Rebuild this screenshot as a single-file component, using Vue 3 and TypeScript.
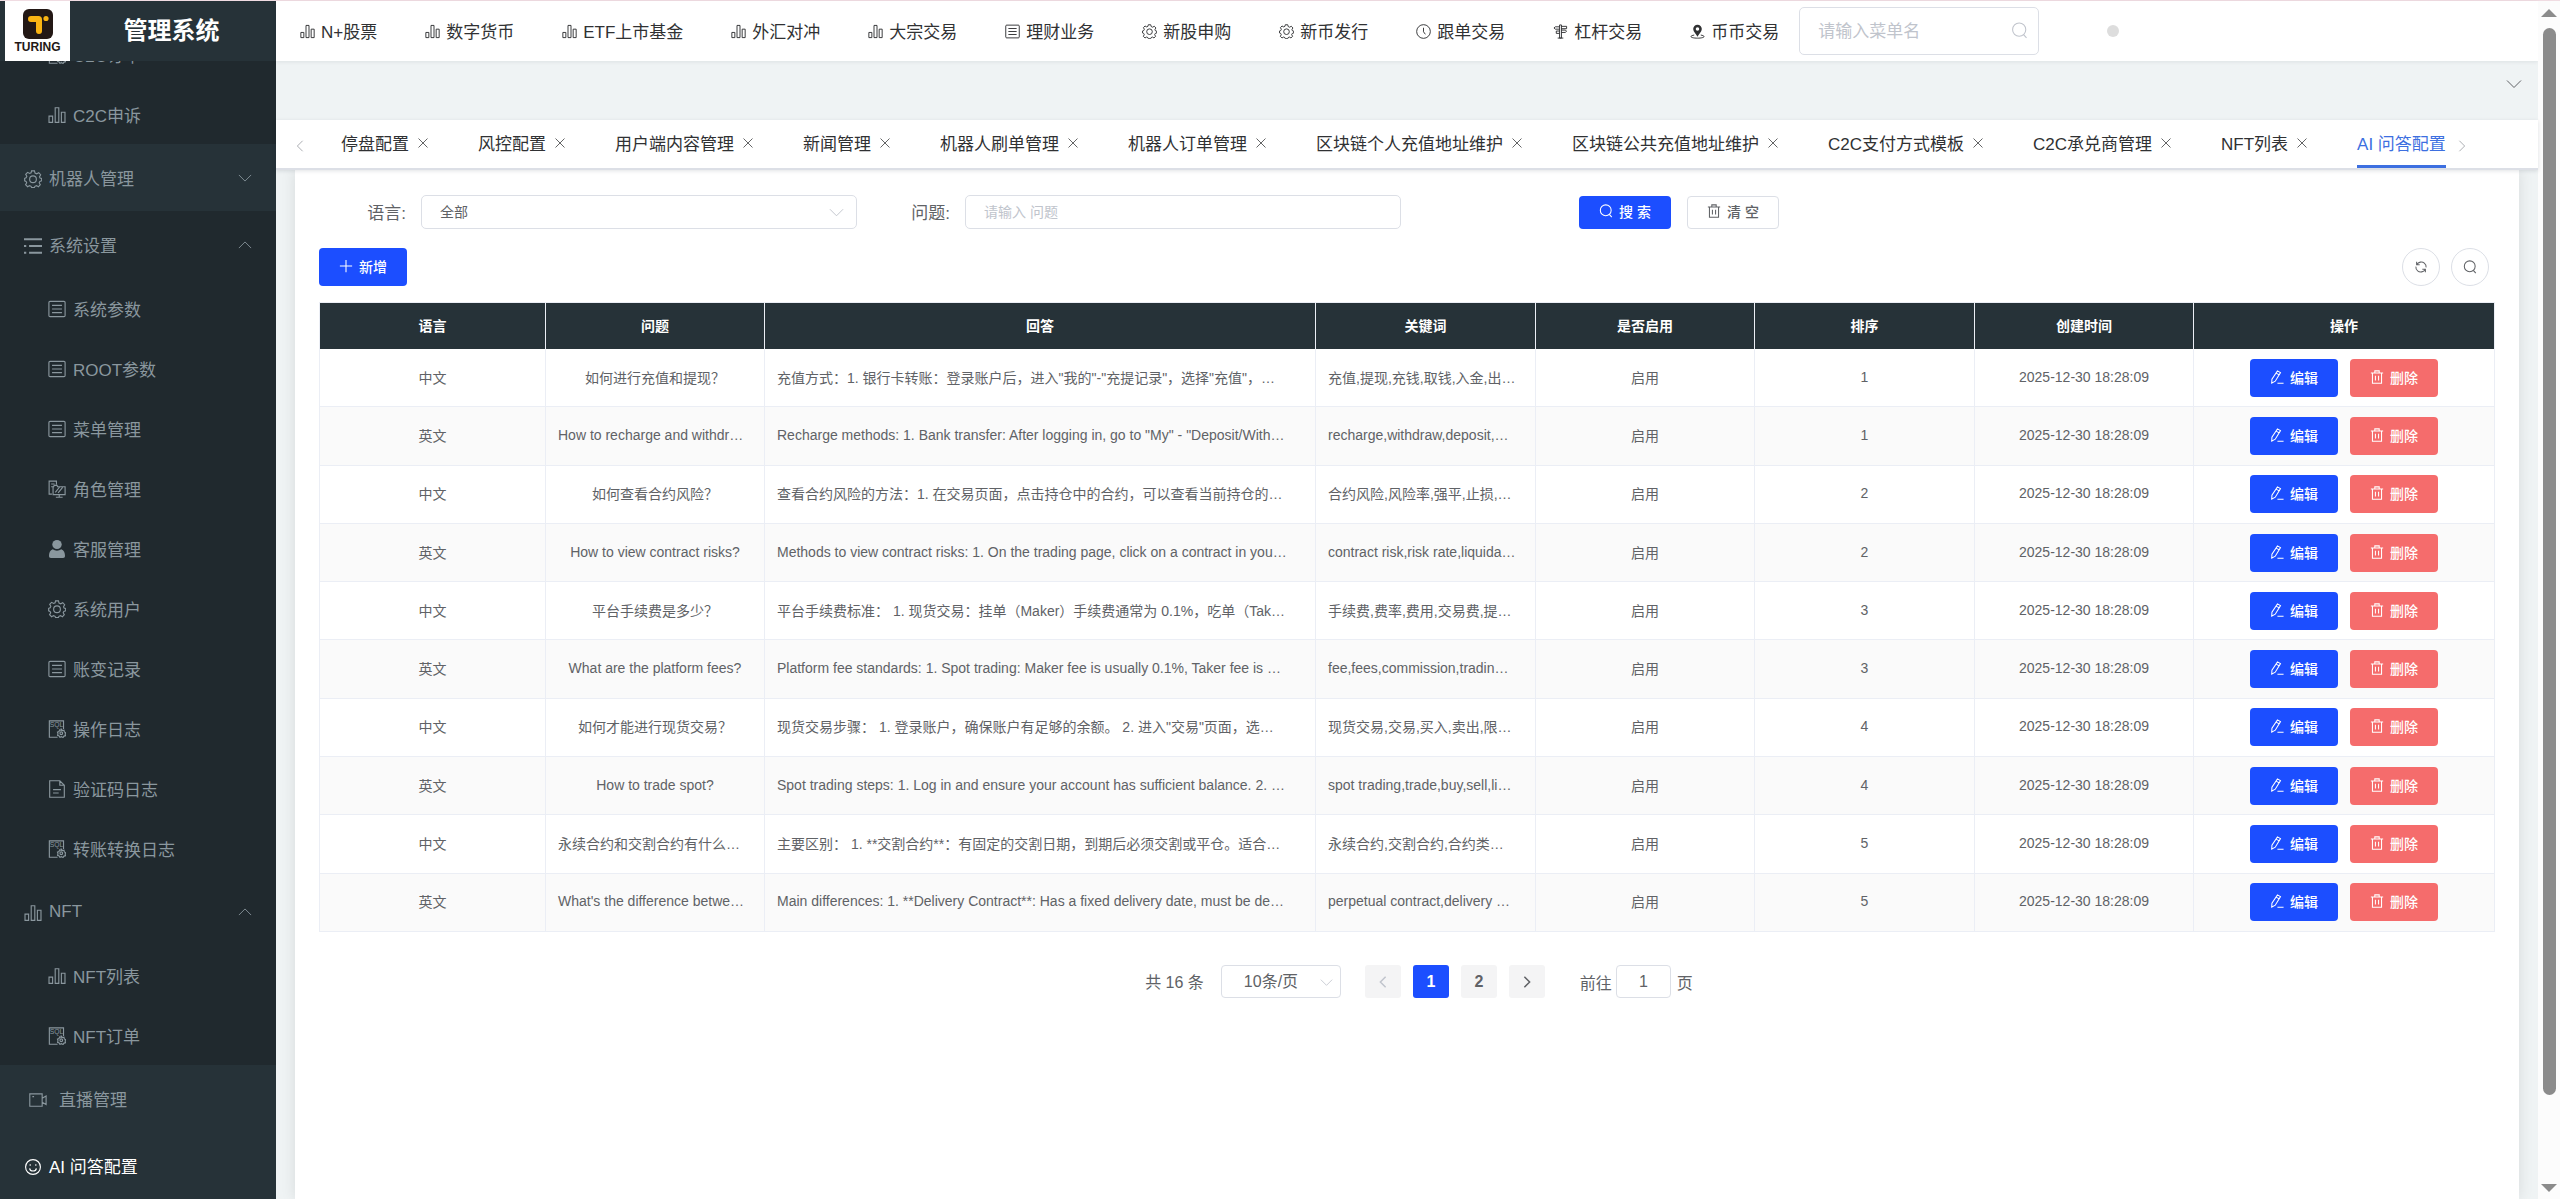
<script setup lang="ts">
import { ref } from 'vue'

interface MenuItem {
  icon: string
  label: string
  kind: 'group' | 'open' | 'sub' | 'plain' | 'live'
  arrow?: 'down' | 'up'
  active?: boolean
}

interface QaRow {
  lang: string
  question: string
  answer: string
  keywords: string
  sort: number
}

const topMenu = [
  { icon: 'bars', label: 'N+股票' },
  { icon: 'bars', label: '数字货币' },
  { icon: 'bars', label: 'ETF上市基金' },
  { icon: 'bars', label: '外汇对冲' },
  { icon: 'bars', label: '大宗交易' },
  { icon: 'list', label: '理财业务' },
  { icon: 'gear', label: '新股申购' },
  { icon: 'gear', label: '新币发行' },
  { icon: 'clock', label: '跟单交易' },
  { icon: 'sign', label: '杠杆交易' },
  { icon: 'pin', label: '币币交易' },
]

const sideMenu: MenuItem[] = [
  { icon: 'sql', label: 'C2C订单', kind: 'sub' },
  { icon: 'bars', label: 'C2C申诉', kind: 'sub' },
  { icon: 'gear', label: '机器人管理', kind: 'group', arrow: 'down' },
  { icon: 'unfold', label: '系统设置', kind: 'open', arrow: 'up' },
  { icon: 'list', label: '系统参数', kind: 'sub' },
  { icon: 'list', label: 'ROOT参数', kind: 'sub' },
  { icon: 'list', label: '菜单管理', kind: 'sub' },
  { icon: 'role', label: '角色管理', kind: 'sub' },
  { icon: 'user', label: '客服管理', kind: 'sub' },
  { icon: 'gear', label: '系统用户', kind: 'sub' },
  { icon: 'list', label: '账变记录', kind: 'sub' },
  { icon: 'sql', label: '操作日志', kind: 'sub' },
  { icon: 'doc', label: '验证码日志', kind: 'sub' },
  { icon: 'sql', label: '转账转换日志', kind: 'sub' },
  { icon: 'bars', label: 'NFT', kind: 'open', arrow: 'up' },
  { icon: 'bars', label: 'NFT列表', kind: 'sub' },
  { icon: 'sql', label: 'NFT订单', kind: 'sub' },
  { icon: 'video', label: '直播管理', kind: 'live' },
  { icon: 'face', label: 'AI 问答配置', kind: 'plain', active: true },
]

const tabs = [
  '停盘配置',
  '风控配置',
  '用户端内容管理',
  '新闻管理',
  '机器人刷单管理',
  '机器人订单管理',
  '区块链个人充值地址维护',
  '区块链公共充值地址维护',
  'C2C支付方式模板',
  'C2C承兑商管理',
  'NFT列表',
]

const columns = [
  { title: '语言', width: 226 },
  { title: '问题', width: 219 },
  { title: '回答', width: 551 },
  { title: '关键词', width: 220 },
  { title: '是否启用', width: 219 },
  { title: '排序', width: 220 },
  { title: '创建时间', width: 219 },
  { title: '操作', width: 301 },
]

const rows: QaRow[] = [
  { lang: '中文', question: '如何进行充值和提现？', answer: '充值方式：1. 银行卡转账：登录账户后，进入"我的"-"充提记录"，选择"充值"，…', keywords: '充值,提现,充钱,取钱,入金,出…', sort: 1 },
  { lang: '英文', question: 'How to recharge and withdr…', answer: 'Recharge methods: 1. Bank transfer: After logging in, go to "My" - "Deposit/With…', keywords: 'recharge,withdraw,deposit,…', sort: 1 },
  { lang: '中文', question: '如何查看合约风险？', answer: '查看合约风险的方法：1. 在交易页面，点击持仓中的合约，可以查看当前持仓的…', keywords: '合约风险,风险率,强平,止损,…', sort: 2 },
  { lang: '英文', question: 'How to view contract risks?', answer: 'Methods to view contract risks: 1. On the trading page, click on a contract in you…', keywords: 'contract risk,risk rate,liquida…', sort: 2 },
  { lang: '中文', question: '平台手续费是多少？', answer: '平台手续费标准： 1. 现货交易：挂单（Maker）手续费通常为 0.1%，吃单（Tak…', keywords: '手续费,费率,费用,交易费,提…', sort: 3 },
  { lang: '英文', question: 'What are the platform fees?', answer: 'Platform fee standards: 1. Spot trading: Maker fee is usually 0.1%, Taker fee is …', keywords: 'fee,fees,commission,tradin…', sort: 3 },
  { lang: '中文', question: '如何才能进行现货交易？', answer: '现货交易步骤： 1. 登录账户，确保账户有足够的余额。 2. 进入"交易"页面，选…', keywords: '现货交易,交易,买入,卖出,限…', sort: 4 },
  { lang: '英文', question: 'How to trade spot?', answer: 'Spot trading steps: 1. Log in and ensure your account has sufficient balance. 2. …', keywords: 'spot trading,trade,buy,sell,li…', sort: 4 },
  { lang: '中文', question: '永续合约和交割合约有什么…', answer: '主要区别： 1. **交割合约**：有固定的交割日期，到期后必须交割或平仓。适合…', keywords: '永续合约,交割合约,合约类…', sort: 5 },
  { lang: '英文', question: "What's the difference betwe…", answer: 'Main differences: 1. **Delivery Contract**: Has a fixed delivery date, must be de…', keywords: 'perpetual contract,delivery …', sort: 5 },
]

const createdAt = '2025-12-30 18:28:09'
const menuQuery = ref('')
const language = ref('all')
const question = ref('')
const pageSize = ref('10')
const jumpTo = ref('1')

const isClipped = (text: string): boolean => text.endsWith('…')
</script>

<template>
  <div class="app">
    <svg class="defs" aria-hidden="true">
      <symbol id="i-bars" viewBox="0 0 16 16">
        <path d="M.9 9h3.2v5.500H.9zM6.400 1.500h3.200v13H6.400zM11.900 5.500h3.200v9h-3.200z" />
      </symbol>
      <symbol id="i-list" viewBox="0 0 16 16">
        <rect x=".8" y="1.200" width="14.400" height="13.600" rx="1" />
        <path d="M3.600 4.800h8.800M3.600 8h8.800M3.600 11.200h8.800" />
      </symbol>
      <symbol id="i-gear" viewBox="0 0 16 16">
        <path d="M6.700.8h2.600l.5 1.900 1.500.7 1.800-1 1.700 1.800-1 1.800.5 1.200 1.400.4v2l-1.600.5-.6 1.300 1 1.700-1.700 1.800-1.700-1-1.400.6-.5 1.200H6.800l-.5-1.200-1.400-.6-1.700 1-1.800-1.800 1-1.700-.6-1.300L.6 9.600V7.400l1.300-.5.6-1.300-1-1.700 1.700-1.800 1.800 1 1.300-.6z" />
        <circle cx="8" cy="8.200" r="3" />
      </symbol>
      <symbol id="i-clock" viewBox="0 0 16 16">
        <circle cx="8" cy="8" r="7.300" />
        <path d="M8 4v4.300l2 2.700" />
      </symbol>
      <symbol id="i-sign" viewBox="0 0 16 16">
        <path d="M7 1h2v14H7zM7 3H2.500L1 4.200l1.500 1.300H7M9 2.500h5.500V5H9M7 7.500H3.500V10H7M9 6.500h4l1.500 1.200L13 9H9M5 15h6" />
      </symbol>
      <symbol id="i-pin" viewBox="0 0 16 16">
        <path fill="currentColor" stroke="none" fill-rule="evenodd" d="M8 .8a4.600 4.600 0 0 1 4.600 4.600C12.600 8.500 9.500 10.600 8 13.500 6.500 10.600 3.400 8.500 3.400 5.400A4.600 4.600 0 0 1 8 .8zm0 2.700a1.900 1.900 0 1 0 0 3.800 1.900 1.900 0 0 0 0-3.800z" />
        <path d="M4.500 11.800C2.500 12.100 1 12.700 1 13.400c0 1 3 1.700 7 1.700s7-.7 7-1.700c0-.7-1.500-1.300-3.500-1.600" />
      </symbol>
      <symbol id="i-unfold" viewBox="0 0 16 16">
        <path stroke-width="1.800" d="M0 2h16M4.500 8H16M4.500 14H16M0 8h2M0 14h2" />
      </symbol>
      <symbol id="i-role" viewBox="0 0 16 16">
        <path d="M3.500 12.500H1V1h6.500v3M2.800 3.500h3M2.800 6h1.500M5 6l.5-1.200H8L8.500 6h6.700v7H4.500V6zM7 15.300h6M10 13v2M6.500 11l4-5M9 11.500l4-5" />
      </symbol>
      <symbol id="i-user" viewBox="0 0 16 18">
        <ellipse cx="8" cy="4.500" rx="4.700" ry="4.500" fill="currentColor" stroke="none" />
        <path fill="currentColor" stroke="none" d="M3.800 9.300c2.200 1.800 6.200 1.800 8.400 0 2.800 1 3.800 3.700 3.800 6.400 0 1.300-.6 2.300-2 2.300H2c-1.400 0-2-1-2-2.300C0 13 1 10.300 3.800 9.300z" />
      </symbol>
      <symbol id="i-sql" viewBox="0 0 16 16">
        <path d="M8.500 15.300H1.200V.8h12.600V8" />
        <text x="7.500" y="6.500" font-size="6" text-anchor="middle" fill="currentColor" stroke="none">SQL</text>
        <circle cx="11.800" cy="11.800" r="1.200" />
        <path d="M11.800 8.200l.9 1.100 1.500-.2.300 1.500 1.300.7-.6 1.200.5 1.400-1.500.4-.8 1.200-1.400-.7-1.400.6-.7-1.300-1.400-.5.400-1.400-.5-1.400 1.400-.6.500-1.400 1.500.4z" />
      </symbol>
      <symbol id="i-doc" viewBox="0 0 16 16">
        <path d="M1.500.7h9l4 4v10.600h-13zM10.500.7v4h4M4.500 8.500h7M4.500 11.500h5" />
      </symbol>
      <symbol id="i-video" viewBox="0 0 16 16">
        <path d="M.7 2.500h11v11H.7zM11.700 6.500l3.500-2v7.500l-3.500-2M3 5h1.500" />
      </symbol>
      <symbol id="i-face" viewBox="0 0 16 16">
        <circle cx="8" cy="8" r="6.600" />
        <path d="M5.500 5.500v1.300M10.500 5.500v1.300M5 9.200c.5 3.200 5.500 3.200 6 0" />
      </symbol>
      <symbol id="i-search" viewBox="0 0 16 16">
        <circle cx="7.700" cy="7.200" r="6.200" />
        <path d="M11.800 11.800l2.800 3.200" />
      </symbol>
      <symbol id="i-trash" viewBox="0 0 16 16">
        <path d="M1 3.500h14M5.500 3.200V1h5v2.200M2.800 3.500v11.700h10.400V3.500M6.200 6.500v5.500M9.800 6.500v5.500" />
      </symbol>
      <symbol id="i-edit" viewBox="0 0 16 16">
        <path d="M8.500 1l3.500 2L6 12.800 2 15l.2-4.500zM7 3.600l3.500 2M8.500 15.200h7" />
      </symbol>
      <symbol id="i-refresh" viewBox="0 0 16 16">
        <path d="M3 2v3.500h3.500M3.200 5.200C5 2.300 9 1.300 11.800 3.500c1.800 1.500 2.300 3 2 5M13 14v-3.500H9.500M12.800 10.800C11 13.700 7 14.700 4.200 12.500c-1.800-1.500-2.300-3-2-5" />
      </symbol>
      <symbol id="i-plus" viewBox="0 0 16 16"><path d="M8 1v14M1 8h14" /></symbol>
      <symbol id="i-close" viewBox="0 0 16 16"><path d="M2 2l12 12M14 2L2 14" /></symbol>
      <symbol id="i-down" viewBox="0 0 16 16"><path d="M1 4.500l7 7 7-7" /></symbol>
      <symbol id="i-up" viewBox="0 0 16 16"><path d="M1 11.500l7-7 7 7" /></symbol>
      <symbol id="i-left" viewBox="0 0 16 16"><path d="M11.500 1l-7 7 7 7" /></symbol>
      <symbol id="i-right" viewBox="0 0 16 16"><path d="M4.500 1l7 7-7 7" /></symbol>
    </svg>

    <aside class="side">
      <div class="brand">
        <div class="logo">
          <svg class="logo-mark" viewBox="0 0 30 30" aria-hidden="true">
            <rect width="30" height="30" rx="6" fill="#231815" />
            <path fill="#fbb413" d="M8 7h7.500a3.500 3.500 0 0 1 3.500 3.500V22a3 3 0 0 1-6 0v-9H8a3 3 0 0 1 0-6z" />
            <circle cx="23" cy="9.500" r="2.600" fill="#fbb413" />
          </svg>
          <span class="logo-name">TURING</span>
        </div>
        <h1 class="title">管理系统</h1>
      </div>
      <nav class="side-menu">
        <a
          v-for="item in sideMenu"
          :key="item.label"
          href="#"
          class="side-item"
          :class="[item.kind, { active: item.active }]"
        >
          <svg class="side-icon"><use :href="'#i-' + item.icon" /></svg>
          <span>{{ item.label }}</span>
          <svg v-if="item.arrow" class="side-arrow"><use :href="'#i-' + item.arrow" /></svg>
        </a>
      </nav>
    </aside>

    <div class="main">
      <header class="top">
        <nav class="top-menu">
          <a v-for="item in topMenu" :key="item.label" href="#" class="top-item">
            <svg class="top-icon"><use :href="'#i-' + item.icon" /></svg>
            <span>{{ item.label }}</span>
          </a>
        </nav>
        <div class="menu-search">
          <input v-model="menuQuery" type="text" placeholder="请输入菜单名" aria-label="请输入菜单名" />
          <svg class="menu-search-icon"><use href="#i-search" /></svg>
        </div>
        <span class="dot"></span>
      </header>

      <div class="band">
        <button type="button" class="bare" aria-label="展开">
          <svg class="icon16"><use href="#i-down" /></svg>
        </button>
      </div>

      <div class="tabs">
        <button type="button" class="bare tab-arrow" aria-label="向左">
          <svg class="icon12"><use href="#i-left" /></svg>
        </button>
        <div v-for="tab in tabs" :key="tab" class="tab">
          <a href="#">{{ tab }}</a>
          <button type="button" class="bare" aria-label="关闭">
            <svg class="icon12"><use href="#i-close" /></svg>
          </button>
        </div>
        <div class="tab current"><a href="#">AI 问答配置</a></div>
        <button type="button" class="bare tab-arrow" aria-label="向右">
          <svg class="icon12"><use href="#i-right" /></svg>
        </button>
      </div>

      <main class="card">
        <form class="filters" @submit.prevent>
          <div class="field">
            <label for="lang">语言:</label>
            <div class="control">
              <select id="lang" v-model="language"><option value="all">全部</option></select>
              <svg class="caret"><use href="#i-down" /></svg>
            </div>
          </div>
          <div class="field">
            <label for="question">问题:</label>
            <div class="control">
              <input id="question" v-model="question" type="text" placeholder="请输入 问题" />
            </div>
          </div>
          <div class="filter-actions">
            <button type="submit" class="btn small primary">
              <svg class="icon14"><use href="#i-search" /></svg>搜 索
            </button>
            <button type="reset" class="btn small outline">
              <svg class="icon14"><use href="#i-trash" /></svg>清 空
            </button>
          </div>
        </form>

        <div class="toolbar">
          <button type="button" class="btn primary">
            <svg class="icon14"><use href="#i-plus" /></svg>新增
          </button>
          <div class="tools">
            <button type="button" class="round" aria-label="刷新">
              <svg class="icon14"><use href="#i-refresh" /></svg>
            </button>
            <button type="button" class="round" aria-label="搜索">
              <svg class="icon14"><use href="#i-search" /></svg>
            </button>
          </div>
        </div>

        <table class="grid">
          <colgroup>
            <col v-for="col in columns" :key="col.title" :style="{ width: col.width + 'px' }" />
          </colgroup>
          <thead>
            <tr>
              <th v-for="col in columns" :key="col.title" scope="col">{{ col.title }}</th>
            </tr>
          </thead>
          <tbody>
            <tr v-for="(row, i) in rows" :key="i">
              <td>{{ row.lang }}</td>
              <td :class="{ clipped: isClipped(row.question) }">{{ row.question }}</td>
              <td :class="{ clipped: isClipped(row.answer) }">{{ row.answer }}</td>
              <td :class="{ clipped: isClipped(row.keywords) }">{{ row.keywords }}</td>
              <td>启用</td>
              <td>{{ row.sort }}</td>
              <td>{{ createdAt }}</td>
              <td class="ops">
                <div class="actions">
                  <button type="button" class="btn primary">
                    <svg class="icon14"><use href="#i-edit" /></svg>编辑
                  </button>
                  <button type="button" class="btn danger">
                    <svg class="icon14"><use href="#i-trash" /></svg>删除
                  </button>
                </div>
              </td>
            </tr>
          </tbody>
        </table>

        <div class="pager">
          <span class="total">共 16 条</span>
          <div class="size">
            <select v-model="pageSize" aria-label="每页条数"><option value="10">10条/页</option></select>
            <svg class="caret"><use href="#i-down" /></svg>
          </div>
          <div class="pages">
            <button type="button" disabled aria-label="上一页">
              <svg class="icon12"><use href="#i-left" /></svg>
            </button>
            <button type="button" class="on">1</button>
            <button type="button">2</button>
            <button type="button" aria-label="下一页">
              <svg class="icon12"><use href="#i-right" /></svg>
            </button>
          </div>
          <label class="jump">前往<input v-model="jumpTo" type="text" />页</label>
        </div>
      </main>
    </div>

    <div class="scroll" aria-hidden="true">
      <span class="scroll-up"></span>
      <span class="scroll-thumb"></span>
      <span class="scroll-gap"></span>
      <span class="scroll-down"></span>
    </div>
  </div>
</template>

<style>
body {
  margin: 0;
  overflow: hidden;
}
</style>

<style scoped>
.app {
  display: flex;
  box-sizing: border-box;
  height: 100vh;
  border-top: 1px solid #f0dce2;
  background: #eff3f4;
  color: #606266;
  font-family: 'Liberation Sans', 'Noto Sans CJK SC', sans-serif;
  font-size: 14px;
}

.app * {
  box-sizing: border-box;
}

.defs {
  display: none;
}

svg {
  flex: none;
  fill: none;
  stroke: currentColor;
  stroke-width: 1;
}

button,
input,
select {
  margin: 0;
  font: inherit;
  color: inherit;
}

button {
  cursor: pointer;
}

a {
  color: inherit;
  text-decoration: none;
}

.icon12 {
  width: 12px;
  height: 12px;
}

.icon14 {
  width: 14px;
  height: 14px;
}

.icon16 {
  width: 16px;
  height: 16px;
}

.bare {
  display: flex;
  padding: 0;
  border: 0;
  background: none;
}

/* sidebar */
.side {
  display: flex;
  flex: none;
  flex-direction: column;
  width: 276px;
  background: #20292e;
}

.brand {
  display: flex;
  flex: none;
  height: 60px;
  padding-left: 5px;
  background: #263238;
}

.logo {
  display: flex;
  flex-direction: column;
  align-items: center;
  width: 65px;
  padding-top: 8px;
  background: #fff;
}

.logo-mark {
  width: 30px;
  height: 30px;
  stroke: none;
}

.logo-name {
  margin-top: 1px;
  color: #231815;
  font-size: 12px;
  font-weight: 700;
  line-height: 14px;
}

.title {
  flex: 1;
  margin: 0;
  padding-right: 3px;
  color: #fff;
  font-size: 24px;
  font-weight: 700;
  line-height: 60px;
  text-align: center;
}

.side-menu {
  display: flex;
  flex: 1;
  flex-direction: column;
  justify-content: flex-end;
  min-height: 0;
  overflow: hidden;
}

.side-item {
  display: flex;
  flex: none;
  align-items: center;
  gap: 7px;
  height: 67px;
  padding: 0 24px;
  background: #263238;
  color: #8a979e;
  font-size: 17px;
}

.side-item.sub {
  height: 60px;
  padding-left: 48px;
  background: #20292e;
}

.side-item.open {
  background: #20292e;
}

.side-item.live {
  gap: 12px;
  padding-left: 29px;
}

.side-item.active {
  color: #fff;
}

.side-icon {
  width: 18px;
  height: 18px;
  margin-top: 2px;
}

.side-arrow {
  width: 14px;
  height: 14px;
  margin-left: auto;
}

/* top bar */
.main {
  display: flex;
  flex: 1;
  flex-direction: column;
  min-width: 0;
}

.top {
  display: flex;
  flex: none;
  align-items: center;
  height: 60px;
  background: #fff;
  box-shadow: 0 1px 4px rgba(0, 21, 41, 0.08);
}

.top-menu {
  display: flex;
}

.top-item {
  display: flex;
  align-items: center;
  gap: 6px;
  padding: 0 24px;
  color: #303133;
  font-size: 17px;
  white-space: nowrap;
}

.top-item:last-child {
  padding-right: 20px;
}

.top-item span,
.tab a,
.field label,
.total {
  padding-bottom: 2px;
}

.top-icon {
  width: 15px;
  height: 15px;
}

.menu-search {
  position: relative;
  width: 240px;
}

.menu-search input {
  display: block;
  width: 100%;
  height: 48px;
  padding: 2px 18px 0;
  border: 1px solid #dcdfe6;
  border-radius: 5px;
  background: #fff;
  font-size: 17px;
  outline: 0;
}

input::placeholder {
  color: #c0c4cc;
  opacity: 1;
}

.menu-search-icon {
  position: absolute;
  top: 15px;
  right: 11px;
  width: 17px;
  height: 17px;
  color: #c0c4cc;
}

.dot {
  width: 12px;
  height: 12px;
  margin-left: 68px;
  border-radius: 50%;
  background: #ddd;
}

.band {
  display: flex;
  flex: none;
  justify-content: flex-end;
  height: 59px;
  padding: 15px 16px 0;
}

/* page tabs */
.tabs {
  position: relative;
  display: flex;
  flex: none;
  align-items: center;
  height: 50px;
  padding-left: 18px;
  border-bottom: 2px solid #dcdfe6;
  background: #fff;
  box-shadow: 0 1px 4px rgba(0, 21, 41, 0.12);
  color: #303133;
  font-size: 17px;
  white-space: nowrap;
}

.tab-arrow {
  padding-top: 3px;
  color: #909399;
}

.tab {
  display: flex;
  align-items: center;
  gap: 8px;
  height: 48px;
  margin-right: 49px;
  padding-bottom: 2px;
}

.tab-arrow + .tab {
  margin-left: 35px;
}

.tab.current {
  margin-right: 10px;
  padding: 1px 0 0;
  border-bottom: 3px solid #3d6fe0;
  color: #3d6fe0;
}

/* content card */
.card {
  flex: 1;
  min-height: 0;
  margin: 0 19px;
  padding: 25px 24px 0;
  background: #fff;
  box-shadow: 0 0 14px rgba(0, 0, 0, 0.1);
}

.filters {
  display: grid;
  grid-template-columns: repeat(4, 1fr);
}

.field {
  display: flex;
  align-items: center;
  padding-right: 6px;
}

.field label {
  flex: none;
  width: 102px;
  padding-right: 15px;
  font-size: 17px;
  text-align: right;
}

.control {
  position: relative;
  flex: 1;
}

.control input,
.control select {
  display: block;
  width: 100%;
  height: 34px;
  padding: 0 18px;
  border: 1px solid #dcdfe6;
  border-radius: 5px;
  background: #fff;
  appearance: none;
  outline: 0;
}

.caret {
  position: absolute;
  top: 10px;
  right: 13px;
  width: 15px;
  height: 15px;
  color: #c0c4cc;
  pointer-events: none;
}

.filter-actions {
  display: flex;
  align-items: center;
  justify-content: center;
  gap: 16px;
}

.btn {
  display: flex;
  align-items: center;
  justify-content: center;
  gap: 6px;
  width: 88px;
  height: 38px;
  padding: 0 0 2px;
  border: 0;
  border-radius: 4px;
  color: #fff;
  font-weight: 500;
}

.btn svg,
.round svg {
  stroke-width: 1.2;
}

.btn.small {
  width: 92px;
  height: 33px;
}

.btn.primary {
  background: #1c4eff;
}

.btn.danger {
  background: #f56c6c;
}

.btn.outline {
  border: 1px solid #dcdfe6;
  background: #fff;
  color: #606266;
}

.toolbar {
  display: flex;
  align-items: center;
  justify-content: space-between;
  padding: 19px 6px 16px 0;
}

.tools {
  display: flex;
  gap: 11px;
}

.round {
  display: flex;
  align-items: center;
  justify-content: center;
  width: 38px;
  height: 38px;
  padding: 0;
  border: 1px solid #dcdfe6;
  border-radius: 50%;
  background: #fff;
}

/* data table */
.grid {
  width: 100%;
  height: 630px;
  border: 1px solid #ebeef5;
  border-right: 0;
  border-bottom: 0;
  border-spacing: 0;
  table-layout: fixed;
}

.grid th {
  height: 46px;
  padding: 0 12px 3px;
  border-right: 1px solid #ebeef5;
  background: #263238;
  color: #fff;
  font-weight: 700;
}

.grid td {
  padding: 0 12px 2px;
  border-right: 1px solid #ebeef5;
  border-bottom: 1px solid #ebeef5;
  text-align: center;
  white-space: nowrap;
}

.grid td.ops {
  padding-bottom: 0;
}

.grid td.clipped {
  overflow: hidden;
  text-align: left;
}

.grid tbody tr:nth-child(even) {
  background: #fafafa;
}

.actions {
  display: flex;
  justify-content: center;
  gap: 12px;
}

/* pagination */
.pager {
  display: flex;
  align-items: center;
  justify-content: center;
  padding: 33px 0 0 24px;
  font-size: 16px;
}

.size {
  position: relative;
  width: 120px;
  margin: 0 24px 0 17px;
}

.size select {
  display: block;
  width: 100%;
  height: 33px;
  padding: 0 22px;
  border: 1px solid #dcdfe6;
  border-radius: 4px;
  background: #fff;
  appearance: none;
}

.size .caret {
  right: 8px;
  width: 13px;
}

.pages {
  display: flex;
  gap: 12px;
}

.pages button {
  display: flex;
  align-items: center;
  justify-content: center;
  width: 36px;
  height: 33px;
  padding: 0;
  border: 0;
  border-radius: 3px;
  background: #f4f4f5;
  font-weight: 700;
}

.pages svg {
  stroke-width: 2;
}

.pages button:disabled {
  color: #c0c4cc;
}

.pages .on {
  background: #1c4eff;
  color: #fff;
}

.jump {
  display: flex;
  align-items: center;
  margin-left: 35px;
}

.jump input {
  width: 55px;
  height: 33px;
  margin: 0 6px 0 4px;
  border: 1px solid #dcdfe6;
  border-radius: 4px;
  text-align: center;
}

/* page scroll bar */
.scroll {
  display: flex;
  flex: none;
  flex-direction: column;
  align-items: center;
  width: 22px;
  padding: 8px 0 7px;
  background: #fcfcfc;
}

.scroll-up,
.scroll-down {
  border: 8px solid transparent;
}

.scroll-up {
  border-top: 0;
  border-bottom-color: #8b8b8b;
}

.scroll-down {
  border-bottom: 0;
  border-top-color: #8b8b8b;
}

.scroll-thumb {
  flex: 12;
  width: 13px;
  margin-top: 11px;
  border-radius: 7px;
  background: #8b8b8b;
}

.scroll-gap {
  flex: 1;
}
</style>
